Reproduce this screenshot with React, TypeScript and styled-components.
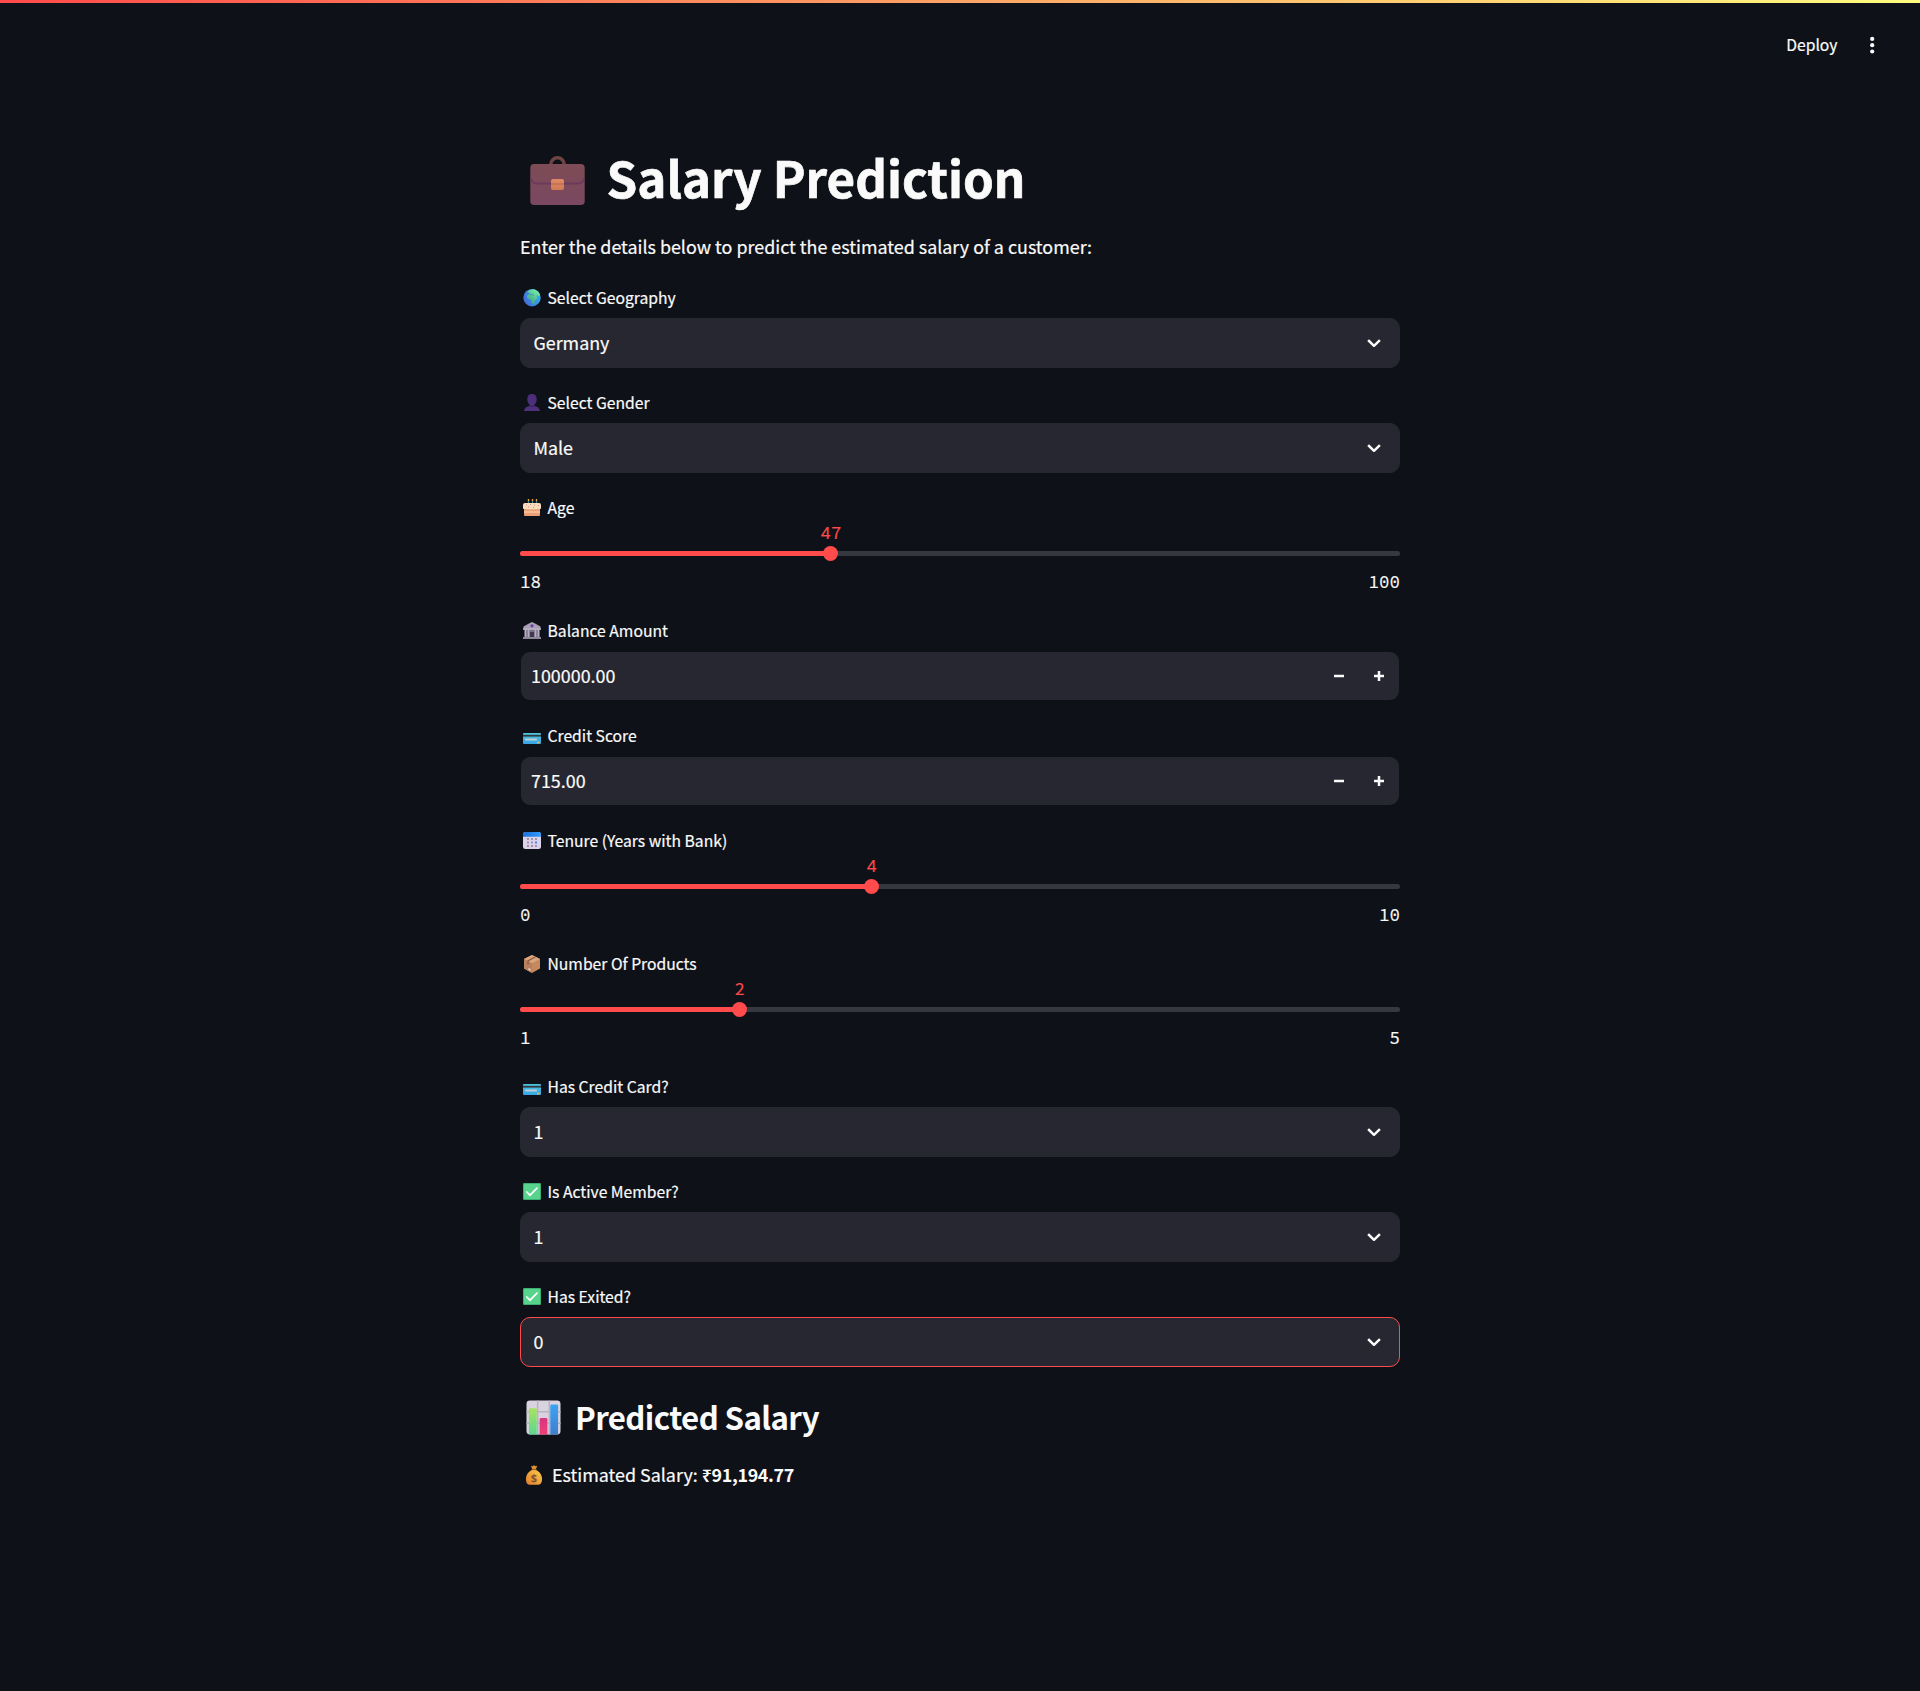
import React from "react";
import styled, { createGlobalStyle } from "styled-components";

const Global = createGlobalStyle`
  *, *::before, *::after { box-sizing: border-box; }
  body {
    margin: 0;
    background: #0e1117;
    color: #fafafa;
    font-family: "Source Sans Pro", "Noto Sans CJK SC", "Noto Sans", sans-serif;
    -webkit-text-stroke: 0.2px currentColor;
  }
`;

const Page = styled.div`
  min-height: 1691px;
  display: flex;
  flex-direction: column;
  background: #0e1117;
`;

const Decoration = styled.div`
  height: 3px;
  background: linear-gradient(90deg, #ff4b4b, #fffd80);
`;

const Toolbar = styled.header`
  height: 84px;
  padding: 0 40px 0 0;
  display: flex;
  justify-content: flex-end;
  align-items: center;
  gap: 26.5px;
`;

const DeployButton = styled.button`
  padding: 0;
  border: 0;
  background: none;
  color: inherit;
  font-family: inherit;
  font-size: 15.7px;
  line-height: 28px;
`;

const MenuButton = styled.button`
  width: 16px;
  height: 28px;
  padding: 0;
  border: 0;
  background: none;
  display: grid;
  place-items: center;
`;

const Main = styled.main`
  width: 880px;
  margin: 0 auto;
  padding-top: 53px;
  display: flex;
  flex-direction: column;
`;

const Title = styled.h1`
  margin: 0;
  height: 73px;
  padding-left: 10px;
  display: flex;
  align-items: center;
  gap: 21.5px;
  font-size: 49.3px;
  font-weight: 700;
  line-height: 73px;
  white-space: nowrap;
  -webkit-text-stroke: 0.7px currentColor;

  svg {
    margin-top: 8px;
  }
`;

const Intro = styled.p`
  margin: 18px 0 21px;
  height: 31px;
  line-height: 31px;
  font-size: 17.9px;
  white-space: nowrap;
`;

const Form = styled.form`
  display: flex;
  flex-direction: column;
  gap: 20px;
`;

const Field = styled.div`
  display: flex;
  flex-direction: column;
`;

const Label = styled.label<{ $gap?: number }>`
  height: 30px;
  margin-bottom: ${(p) => p.$gap ?? 5}px;
  padding-left: 3px;
  display: flex;
  align-items: center;
  gap: 6.5px;
  font-size: 15.7px;
  line-height: 30px;
  white-space: nowrap;
`;

const SelectBox = styled.div<{ $focused?: boolean }>`
  height: 50px;
  padding: 0 17px 0 12.4px;
  border: 1px solid ${(p) => (p.$focused ? "#ff4b4b" : "#262730")};
  border-radius: 10px;
  background: #262730;
  display: flex;
  align-items: center;
  justify-content: space-between;
  font-size: 17.9px;
  line-height: 30px;
`;

const SelectValue = styled.span`
  padding-bottom: 2px;
`;

const NumberBox = styled.div`
  height: 48px;
  margin: 1px;
  padding-left: 10px;
  border-radius: 9px;
  background: #262730;
  display: flex;
  align-items: center;
  font-size: 17.9px;
  line-height: 30px;
`;

const NumberValue = styled.span`
  flex: 1;
  padding-bottom: 2px;
`;

const StepButton = styled.button`
  width: 40px;
  height: 48px;
  padding: 0;
  border: 0;
  background: none;
  display: grid;
  place-items: center;
`;

const SliderArea = styled.div`
  height: 73px;
  padding-top: 28px;
`;

const Track = styled.div`
  position: relative;
  height: 5px;
  border-radius: 5px;
  background: #363840;
`;

const Fill = styled.div`
  height: 5px;
  border-radius: 5px;
  background: #ff4b4b;
`;

const Thumb = styled.div`
  position: absolute;
  top: -5px;
  width: 15px;
  height: 15px;
  margin-left: -7.8px;
  border-radius: 50%;
  background: #ff4b4b;
`;

const ThumbValue = styled.span`
  position: absolute;
  left: 50%;
  bottom: 17px;
  transform: translateX(-50%);
  color: #ff4b4b;
  font-family: "Source Code Pro", "Noto Sans Mono CJK SC", "Liberation Mono", monospace;
  font-size: 17.5px;
  line-height: 22px;
`;

const Range = styled.div`
  margin-top: 13px;
  display: flex;
  justify-content: space-between;
  font-family: "Source Code Pro", "Noto Sans Mono CJK SC", "Liberation Mono", monospace;
  font-size: 17.5px;
  line-height: 26px;
`;

const ResultTitle = styled.h3`
  margin: 25px 0 0;
  height: 50px;
  padding-left: 6px;
  display: flex;
  align-items: center;
  gap: 14px;
  font-size: 31.2px;
  font-weight: 600;
  line-height: 50px;
  letter-spacing: -0.6px;
  white-space: nowrap;
  -webkit-text-stroke: 0;
`;

const ResultLine = styled.p`
  margin: 17px 0 0;
  height: 31px;
  padding-left: 5px;
  display: flex;
  align-items: center;
  gap: 9px;
  font-size: 17.9px;
  line-height: 31px;
  white-space: nowrap;
`;

const Amount = styled.strong`
  font-weight: 600;
  letter-spacing: -0.35px;
  -webkit-text-stroke: 0;
`;

const Briefcase = () => (
  <svg width="55" height="50" viewBox="0 0 55 50">
    <defs>
      <linearGradient id="case" x1="0" y1="0" x2="0" y2="1">
        <stop offset="0" stopColor="#7d4c55" />
        <stop offset="1" stopColor="#7a4861" />
      </linearGradient>
      <linearGradient id="clasp" x1="0" y1="0" x2="0" y2="1">
        <stop offset="0" stopColor="#e08a66" />
        <stop offset="1" stopColor="#d27a55" />
      </linearGradient>
    </defs>
    <path d="M20.8 10V8.500a6.700 6.700 0 0 1 13.400 0V10" fill="none" stroke="#6f4544" strokeWidth="3.4" />
    <rect x="0.3" y="8" width="54.4" height="41" rx="3.8" fill="url(#case)" />
    <path d="M1 22.500q1 5 6 5h41q5 0 6-5" fill="none" stroke="#6c3b5b" strokeWidth="1.8" />
    <rect x="21" y="23" width="13" height="11" rx="2" fill="url(#clasp)" />
    <path d="M21 28h13" stroke="#b8644f" strokeWidth="1" />
  </svg>
);

const Globe = () => (
  <svg width="18" height="18" viewBox="0 0 18 18">
    <defs>
      <linearGradient id="sea" x1="1" y1="0.2" x2="0" y2="0.7">
        <stop offset="0" stopColor="#2fb6f4" />
        <stop offset="1" stopColor="#4468d4" />
      </linearGradient>
      <linearGradient id="land" x1="0.9" y1="0" x2="0.2" y2="1">
        <stop offset="0" stopColor="#7df5a8" />
        <stop offset="1" stopColor="#3c9c86" />
      </linearGradient>
    </defs>
    <circle cx="9" cy="8.7" r="8.7" fill="url(#sea)" />
    <path d="M4.500 2.500l3-1.700 4-.6 3.500 2.200 2.200 3.600-1.700 1.300-1-1.300-1 1 1 2-2.500 2.200-.5 3-1.500 1.300-1.500-2-.2-2.800-3.300-.6-1.200-2.300 1.200-2.200 2.500-.6z" fill="url(#land)" />
    <path d="M6.500 5.600h3l1.500 1" fill="none" stroke="#3b84cf" strokeWidth=".8" />
  </svg>
);

const Bust = () => (
  <svg width="18" height="18" viewBox="0 0 18 18">
    <defs>
      <linearGradient id="bust" x1="1" y1="0" x2="0" y2="1">
        <stop offset="0" stopColor="#4a2b7c" />
        <stop offset="1" stopColor="#4f3478" />
      </linearGradient>
    </defs>
    <path d="M9 0c3.200 0 4.700 1.800 4.700 5.200 0 2.500-1 4.300-2.300 5.400v1.400c2.800.5 5.300 2 5.600 5H1c.3-3 2.800-4.500 5.600-5v-1.400C5.300 9.500 4.300 7.700 4.300 5.200 4.300 1.800 5.800 0 9 0z" fill="url(#bust)" />
    <path d="M6.600 11.200q2.400 1.500 4.800 0v1q-2.400 1.200-4.800 0z" fill="#341f58" />
  </svg>
);

const Cake = () => (
  <svg width="18" height="18" viewBox="0 0 18 18">
    <path d="M5.500 1v4M9.500 1v4M13.500 1v4" stroke="#3f7f8a" strokeWidth="1.3" />
    <path d="M5.500 0v2M9.500 0v2M13.500 0v2" stroke="#e9a52f" strokeWidth="1.3" />
    <rect x="1" y="8" width="16" height="9" rx="1" fill="#ee9f78" />
    <path d="M1 13h16" stroke="#fac9a0" strokeWidth="1.5" />
    <path d="M0 6q0-2 2-2h14q2 0 2 2v3.500q-1.500 1.500-3 .3-1.500 1.200-3 .2-1.500 1-3 0-1.500 1-3 0-1.500 1-3-.2-1.500 1-3-.3z" fill="#f8dfba" />
    <path d="M3 6h1M7 5.500h1M11 6h1M15 6.500h1M5 8h1M10 8.500h1" stroke="#d98b9c" strokeWidth="1" />
  </svg>
);

const Bank = () => (
  <svg width="18" height="18" viewBox="0 0 18 18">
    <path d="M9 0l3.500 1.800L17.500 4.500V8H.5V4.500L5.500 1.800z" fill="#aaa0b5" />
    <circle cx="9" cy="3.8" r="1.600" fill="#6840a0" />
    <path d="M1.500 8h15v7h-15z" fill="#79718a" />
    <path d="M2.500 8v7M5.500 8v7M12.500 8v7M15.500 8v7" stroke="#b6adc0" strokeWidth="1.6" />
    <path d="M7 10h4v5H7z" fill="#41384f" />
    <path d="M0 7h18M0 16h18" stroke="#b8b0c2" strokeWidth="1.7" />
  </svg>
);

const Card = () => (
  <svg width="18" height="18" viewBox="0 0 18 18">
    <defs>
      <linearGradient id="card" x1="0" y1="0" x2="0" y2="1">
        <stop offset="0" stopColor="#48c6dc" />
        <stop offset="1" stopColor="#38a4e8" />
      </linearGradient>
    </defs>
    <rect y="6" width="18" height="11" rx="1" fill="url(#card)" />
    <path d="M0 8.700h18" stroke="#33383f" strokeWidth="1.8" />
    <path d="M3 12.500h10" stroke="#c2ccd5" strokeWidth="2.2" strokeLinecap="round" />
    <path d="M14 15.500h2.500" stroke="#e0b93f" strokeWidth="1.8" />
  </svg>
);

const Calendar = () => (
  <svg width="18" height="18" viewBox="0 0 18 18">
    <defs>
      <linearGradient id="calTop" x1="0" y1="0" x2="1" y2="0">
        <stop offset="0" stopColor="#1e6ed8" />
        <stop offset="1" stopColor="#2f9dff" />
      </linearGradient>
    </defs>
    <rect y="0" width="18" height="17" rx="2.5" fill="#dcd2ea" />
    <path d="M0 4.800V2.500Q0 0 2.500 0h13Q18 0 18 2.500v2.300z" fill="url(#calTop)" />
    <path d="M4 6h2v2H4zM8 6h2v2H8zM12 6h2v2h-2zM4 9.500h2v2H4zM8 9.500h2v2H8zM4 13h2v2H4zM8 13h2v2H8zM12 13h2v2h-2z" fill="#9d94ab" />
    <path d="M12 9.500h2v2h-2z" fill="#2f8df0" />
  </svg>
);

const Package = () => (
  <svg width="18" height="18" viewBox="0 0 18 18">
    <path d="M9 0l8 4v9.500L9 18l-8-4.500V4z" fill="#c48a5e" />
    <path d="M9 0l8 4-8 4.300L1 4z" fill="#dba67a" />
    <path d="M1 4l8 4.300V18l-8-4.500z" fill="#b9805f" />
    <path d="M12.500 1.800L5 6v3.500" fill="none" stroke="#8b5b44" strokeWidth="1.3" />
    <path d="M5.500 13l2 1v2l-2-1z" fill="#efd6d0" />
  </svg>
);

const Check = () => (
  <svg width="18" height="18" viewBox="0 0 18 18">
    <rect width="18" height="17" rx="1.2" fill="#3fae72" />
    <rect x="1" y="1" width="16" height="15" rx=".8" fill="#57d38c" />
    <path d="M3.800 9l3.200 3.200L14 5.200" fill="none" stroke="#fff" strokeWidth="1.7" strokeLinecap="round" />
  </svg>
);

const Chart = () => (
  <svg width="35" height="35" viewBox="0 0 36 36">
    <defs>
      <linearGradient id="green" x1="0" y1="0" x2="0" y2="1">
        <stop offset="0" stopColor="#a6e35c" />
        <stop offset="1" stopColor="#5bd892" />
      </linearGradient>
      <linearGradient id="blue" x1="0" y1="0" x2="0" y2="1">
        <stop offset="0" stopColor="#38a5f3" />
        <stop offset="1" stopColor="#3f7ed0" />
      </linearGradient>
      <linearGradient id="pink" x1="0" y1="0" x2="0" y2="1">
        <stop offset="0" stopColor="#d93480" />
        <stop offset="1" stopColor="#f03f77" />
      </linearGradient>
    </defs>
    <rect x=".5" y=".5" width="35" height="35" rx="3.5" fill="#d9d2df" />
    <path d="M12 .5v35M24 .5v35M.5 12h35M.5 24h35" stroke="#b9b2c0" strokeWidth="1.5" />
    <path d="M3 35.500V10q0-1.500 1.500-1.500h5Q11 8.500 11 10v25.500z" fill="url(#green)" />
    <path d="M14 35.500V20q0-1.500 1.500-1.500h5q1.500 0 1.500 1.500v15.500z" fill="url(#pink)" />
    <path d="M25 35.500V6q0-1.500 1.500-1.500h5Q33 4.500 33 6v29.500z" fill="url(#blue)" />
  </svg>
);

const DollarMark = styled.text`
  font-family: "Noto Sans", sans-serif;
  font-size: 11px;
  font-weight: 700;
`;

const MoneyBag = () => (
  <svg width="18" height="20" viewBox="0 0 18 20">
    <defs>
      <linearGradient id="bag" x1="1" y1="0" x2="0" y2="1">
        <stop offset="0" stopColor="#ffcb4a" />
        <stop offset="1" stopColor="#df7c2c" />
      </linearGradient>
    </defs>
    <path d="M6 .8l2 .4L9 0l1.200 1.200 2-.4L11 4H7.200z" fill="#e3932e" />
    <path d="M7 5h4c4 1.500 6.500 6 6 10-.3 3.500-2 4.800-4 4.800H5C3 19.800 1.200 18.500 1 15c-.4-4 2-8.500 6-10z" fill="url(#bag)" />
    <path d="M6.500 4.500h5" stroke="#a05a32" strokeWidth="1.3" />
    <DollarMark x="9" y="16.8" textAnchor="middle" fill="#87502f">$</DollarMark>
  </svg>
);

const Chevron = () => (
  <svg width="16" height="10" viewBox="0 0 16 10">
    <path d="M3 3l5 4.800L13 3" fill="none" stroke="#fafafa" strokeWidth="2.5" strokeLinecap="square" strokeLinejoin="round" />
  </svg>
);

const Minus = () => (
  <svg width="10" height="10" viewBox="0 0 10 10">
    <path d="M0 5h10" stroke="#fafafa" strokeWidth="2.5" />
  </svg>
);

const Plus = () => (
  <svg width="10" height="10" viewBox="0 0 10 10">
    <path d="M0 5h10M5 0v10" stroke="#fafafa" strokeWidth="2.5" />
  </svg>
);

const Dots = () => (
  <svg width="6" height="18" viewBox="0 0 6 18" fill="#fafafa">
    <circle cx="3.2" cy="2.9" r="2.1" />
    <circle cx="3.2" cy="9.2" r="2.1" />
    <circle cx="3.2" cy="15.500" r="2.1" />
  </svg>
);

type FieldProps = { icon: React.ReactNode; label: string };

const SelectField = ({ icon, label, value, focused }: FieldProps & { value: string; focused?: boolean }) => (
  <Field>
    <Label>{icon}{label}</Label>
    <SelectBox $focused={focused}>
      <SelectValue>{value}</SelectValue>
      <Chevron />
    </SelectBox>
  </Field>
);

const NumberField = ({ icon, label, value }: FieldProps & { value: string }) => (
  <Field>
    <Label>{icon}{label}</Label>
    <NumberBox>
      <NumberValue>{value}</NumberValue>
      <StepButton type="button"><Minus /></StepButton>
      <StepButton type="button"><Plus /></StepButton>
    </NumberBox>
  </Field>
);

const SliderField = ({ icon, label, min, max, value }: FieldProps & { min: number; max: number; value: number }) => {
  const position = `${((value - min) / (max - min)) * 100}%`;
  return (
    <Field>
      <Label $gap={0}>{icon}{label}</Label>
      <SliderArea>
        <Track>
          <Fill style={{ width: position }} />
          <Thumb style={{ left: position }}>
            <ThumbValue>{value}</ThumbValue>
          </Thumb>
        </Track>
        <Range>
          <span>{min}</span>
          <span>{max}</span>
        </Range>
      </SliderArea>
    </Field>
  );
};

export default function App() {
  return (
    <Page>
      <Global />
      <Decoration />
      <Toolbar>
        <DeployButton>Deploy</DeployButton>
        <MenuButton><Dots /></MenuButton>
      </Toolbar>
      <Main>
        <Title><Briefcase />Salary Prediction</Title>
        <Intro>Enter the details below to predict the estimated salary of a customer:</Intro>
        <Form>
          <SelectField icon={<Globe />} label="Select Geography" value="Germany" />
          <SelectField icon={<Bust />} label="Select Gender" value="Male" />
          <SliderField icon={<Cake />} label="Age" min={18} max={100} value={47} />
          <NumberField icon={<Bank />} label="Balance Amount" value="100000.00" />
          <NumberField icon={<Card />} label="Credit Score" value="715.00" />
          <SliderField icon={<Calendar />} label="Tenure (Years with Bank)" min={0} max={10} value={4} />
          <SliderField icon={<Package />} label="Number Of Products" min={1} max={5} value={2} />
          <SelectField icon={<Card />} label="Has Credit Card?" value="1" />
          <SelectField icon={<Check />} label="Is Active Member?" value="1" />
          <SelectField icon={<Check />} label="Has Exited?" value="0" focused />
        </Form>
        <ResultTitle><Chart />Predicted Salary</ResultTitle>
        <ResultLine>
          <MoneyBag />
          <span>Estimated Salary: <Amount>₹91,194.77</Amount></span>
        </ResultLine>
      </Main>
    </Page>
  );
}
